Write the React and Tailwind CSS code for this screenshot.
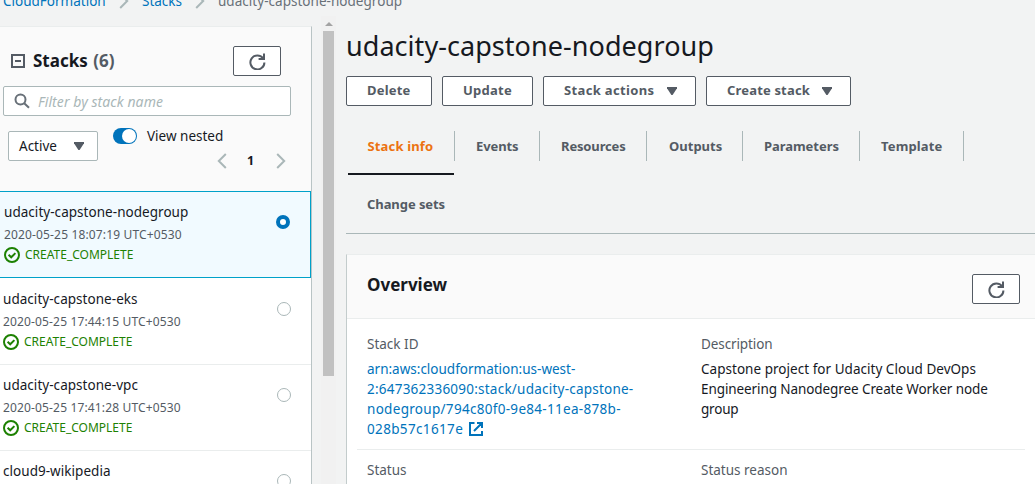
import React from 'react';

function RefreshIcon() {
  return (
    <svg className="size-[17px]" viewBox="0 0 17 17" fill="none" stroke="#545b64" strokeWidth="2">
      <path d="M14 5.2A7 7 0 1 0 15.4 9.4" />
      <path d="M15 .5V6h-5.4" />
      <path d="M15.5 2.6V6.5h-4.6z" fill="#545b64" stroke="none" />
    </svg>
  );
}

function RefreshButton() {
  return (
    <button className="flex h-[30px] w-12 shrink-0 items-center justify-center rounded-xs border border-[#545b64] bg-white">
      <RefreshIcon />
    </button>
  );
}

function Caret() {
  return (
    <svg className="h-2 w-2.5" viewBox="0 0 10 8" fill="#545b64">
      <path d="M0 0h10v1.2L5.6 8H4.4L0 1.2z" />
    </svg>
  );
}

function Chevron({ left = false, className }) {
  return (
    <svg className={className} viewBox="0 0 10 16" fill="none" stroke="#aab7b8" strokeWidth="2">
      <path d={left ? 'M8.8 1 1.8 8l7 7' : 'M1.2 1l7 7-7 7'} />
    </svg>
  );
}

function CheckIcon() {
  return (
    <svg className="size-4" viewBox="0 0 16 16" fill="none" stroke="#1d8102" strokeWidth="2">
      <circle cx="8" cy="8" r="7" />
      <path d="M4.6 7.8l2.6 2.5 4.2-4.2" />
    </svg>
  );
}

function StackRow({ name, date, selected = false }) {
  return (
    <li
      className={
        selected
          ? 'mb-px flex h-[87px] shrink-0 border-y border-r border-[#00a1c9] bg-[#f1faff] pt-2.5 pl-1'
          : 'flex h-[86px] shrink-0 border-b border-[#eaeded] bg-white pt-2.5 pl-[3px]'
      }
    >
      <div className="flex-1">
        <div className="text-[13.5px] leading-5 tracking-[0.04px] text-[#16191f]">{name}</div>
        {date && (
          <>
            <div className="mt-[3px] text-[12px] leading-5 tracking-[0.15px] text-[#545b64]">{date}</div>
            <div className="flex items-center gap-[5px] text-[12px] leading-5 text-[#1d8102]">
              <CheckIcon />
              CREATE_COMPLETE
            </div>
          </>
        )}
      </div>
      <span
        className={
          selected
            ? 'mt-[13px] mr-5 size-3.5 rounded-full border-4 border-[#0073bb] bg-white'
            : 'mt-[13px] mr-5 size-3.5 rounded-full border border-[#aab7b8] bg-white'
        }
      />
    </li>
  );
}

function Sidebar() {
  return (
    <aside className="mt-[15px] flex h-[458px] w-[312px] shrink-0 flex-col overflow-hidden border-t border-r border-t-[#eaeded] border-r-[#b9c4c5] bg-white">
      <div className="h-[164px] shrink-0 bg-[#fafafa] pt-[19px]">
        <div className="flex h-[30px] items-center pr-[30px] pl-[11px]">
          <svg className="size-3.5" viewBox="0 0 14 14" fill="none" stroke="#545b64" strokeWidth="2">
            <path d="M1 1h12v12H1zM4 7h6" />
          </svg>
          <h2 className="ml-2 flex-1 text-[17px] leading-6 font-bold text-[#16191f]">
            Stacks <span className="ml-px text-[#545b64]">(6)</span>
          </h2>
          <RefreshButton />
        </div>
        <div className="mt-2.5 ml-[3px] flex h-[30px] w-72 items-center rounded-xs border border-[#aab7b8] bg-white pl-2.5">
          <svg className="size-4" viewBox="0 0 16 16" fill="none" stroke="#687078" strokeWidth="2">
            <circle cx="6.5" cy="6.5" r="5" />
            <path d="M10.2 10.2l4.8 4.6" />
          </svg>
          <span className="ml-2 pt-px text-[14px] leading-5 tracking-[0.07px] text-[#aab7b8] italic">Filter by stack name</span>
        </div>
        <div className="flex pl-2">
          <div className="mt-[15px] flex h-[30px] w-[90px] items-center justify-between rounded-xs border border-[#aab7b8] bg-white pr-[13px] pl-2.5 text-[13.5px] text-[#16191f]">
            Active
            <Caret />
          </div>
          <div className="ml-[15px] flex-1 pt-2.5">
            <div className="flex h-5 items-center text-[13.5px] text-[#16191f]">
              <span className="mr-2.5 flex h-4 w-6 items-center justify-end rounded-full bg-[#0073bb] pr-px">
                <span className="size-3.5 rounded-full bg-white" />
              </span>
              View nested
            </div>
            <div className="mt-[5px] flex h-5 items-center justify-end pr-[25px] text-[12.5px] font-bold text-[#16191f]">
              <Chevron left className="h-4 w-2.5" />
              <span className="w-[49px] pr-0.5 text-center">1</span>
              <Chevron className="h-4 w-2.5" />
            </div>
          </div>
        </div>
      </div>
      <ul className="flex flex-col">
        <StackRow selected name="udacity-capstone-nodegroup" date="2020-05-25 18:07:19 UTC+0530" />
        <StackRow name="udacity-capstone-eks" date="2020-05-25 17:44:15 UTC+0530" />
        <StackRow name="udacity-capstone-vpc" date="2020-05-25 17:41:28 UTC+0530" />
        <StackRow name="cloud9-wikipedia" />
      </ul>
    </aside>
  );
}

const buttonClass =
  'flex h-[30px] items-center rounded-xs border border-[#545b64] bg-white pl-5 text-[13px] font-bold text-[#545b64]';

function Tab({ className, children }) {
  return (
    <div className={`flex h-[30px] items-center border-r border-[#aab7b8] pt-px ${className}`}>{children}</div>
  );
}

function Main() {
  return (
    <main className="ml-3 flex-1 pt-[15px]">
      <h1 className="h-10 text-[27px] leading-10 tracking-[0.05px] text-[#16191f]">udacity-capstone-nodegroup</h1>
      <div className="mt-2.5 flex gap-2.5">
        <button className={`${buttonClass} w-[86px] tracking-[0.2px]`}>Delete</button>
        <button className={`${buttonClass} w-[91px] tracking-[0.25px]`}>Update</button>
        <button className={`${buttonClass} w-[153px] justify-between pr-[18px] tracking-[0.35px]`}>
          Stack actions
          <Caret />
        </button>
        <button className={`${buttonClass} w-[145px] justify-between pr-[18px] tracking-[0.17px]`}>
          Create stack
          <Caret />
        </button>
      </div>
      <nav className="mt-[25px] h-[103px] border-b border-[#aab7b8] text-[13px] font-bold text-[#545b64]">
        <div className="flex">
          <Tab className="w-[109px] pl-[21.5px] tracking-[0.15px] text-[#ec7211]">Stack info</Tab>
          <Tab className="w-[85px] pl-[21px] tracking-[-0.1px]">Events</Tab>
          <Tab className="w-[107px] pl-[21px] tracking-[-0.15px]">Resources</Tab>
          <Tab className="w-24 pl-[22px]">Outputs</Tab>
          <Tab className="w-[117px] pl-[21px] tracking-[-0.05px]">Parameters</Tab>
          <Tab className="w-[104px] pl-[21px] tracking-[0.15px]">Template</Tab>
        </div>
        <div className="mt-3 ml-[2px] h-0.5 w-[106px] bg-[#16191f]" />
        <div className="mt-[19px] pl-[21px] leading-5 tracking-[-0.07px]">Change sets</div>
      </nav>
      <section className="mt-5 h-[230px] border-t border-l border-t-[#eaeded] border-l-[#c3cccc] bg-white">
        <header className="flex h-[64px] items-start justify-between border-b border-[#eaeded] bg-[#fafafa] pr-[15px] pl-5">
          <h2 className="mt-[18px] text-[17px] leading-6 font-bold text-[#16191f]">Overview</h2>
          <div className="mt-[19px]">
            <RefreshButton />
          </div>
        </header>
        <div className="mr-2.5 ml-2.5 grid h-[131px] grid-cols-[334px_1fr] border-b border-[#eaeded] pt-[15px] pl-2.5 text-[13.5px] leading-5">
          <div>
            <div className="text-[#545b64]">Stack ID</div>
            <div className="mt-[5px] text-[#0073bb]">
              <div>arn:aws:cloudformation:us-west-</div>
              <div className="tracking-[0.23px]">2:647362336090:stack/udacity-capstone-</div>
              <div className="tracking-[0.3px]">nodegroup/794c80f0-9e84-11ea-878b-</div>
              <div className="flex items-center tracking-[0.35px]">
                028b57c1617e
                <svg className="ml-1.5 size-3.5" viewBox="0 0 14 14" fill="none" stroke="#0073bb" strokeWidth="2">
                  <path d="M5.5 1H1v12h12V9M8 1h5v5M13 1L5 9" />
                </svg>
              </div>
            </div>
          </div>
          <div>
            <div className="tracking-[-0.1px] text-[#545b64]">Description</div>
            <div className="mt-[5px] text-[#16191f]">
              <div className="tracking-[0.03px]">Capstone project for Udacity Cloud DevOps</div>
              <div className="tracking-[-0.09px]">Engineering Nanodegree Create Worker node</div>
              <div className="tracking-[-0.2px]">group</div>
            </div>
          </div>
        </div>
        <div className="grid grid-cols-[334px_1fr] pt-2.5 pl-5 text-[13.5px] leading-5 text-[#545b64]">
          <div>Status</div>
          <div>Status reason</div>
        </div>
      </section>
    </main>
  );
}

export default function App() {
  return (
    <div className="flex h-[484px] w-[1035px] flex-col overflow-hidden bg-[#f2f3f3] font-['Noto_Sans',sans-serif]">
      <nav className="-mt-[9px] flex h-5 shrink-0 items-center pl-[3px] text-[13.5px] leading-5 text-[#0073bb]">
        <span className="w-[116px]">CloudFormation</span>
        <Chevron className="-mt-px mr-[13px] h-4 w-2.5" />
        <span className="w-[53px]">Stacks</span>
        <Chevron className="-mt-px mr-[13px] h-4 w-2.5" />
        <span className="tracking-[0.03px] text-[#687078]">udacity-capstone-nodegroup</span>
      </nav>
      <div className="flex h-[473px] shrink-0">
        <Sidebar />
        <div className="mt-[5px] ml-[9px] flex w-[15px] shrink-0 flex-col items-center bg-[#f1f1f1] pt-1.5">
          <svg className="h-1 w-2" viewBox="0 0 8 4" fill="#a3a3a3">
            <path d="M4 0l4 4H0z" />
          </svg>
          <div className="mt-[5px] h-[345px] w-[11px] bg-[#c1c1c1]" />
        </div>
        <div className="-ml-0.5 flex min-w-0 flex-1">
          <Main />
        </div>
      </div>
    </div>
  );
}
